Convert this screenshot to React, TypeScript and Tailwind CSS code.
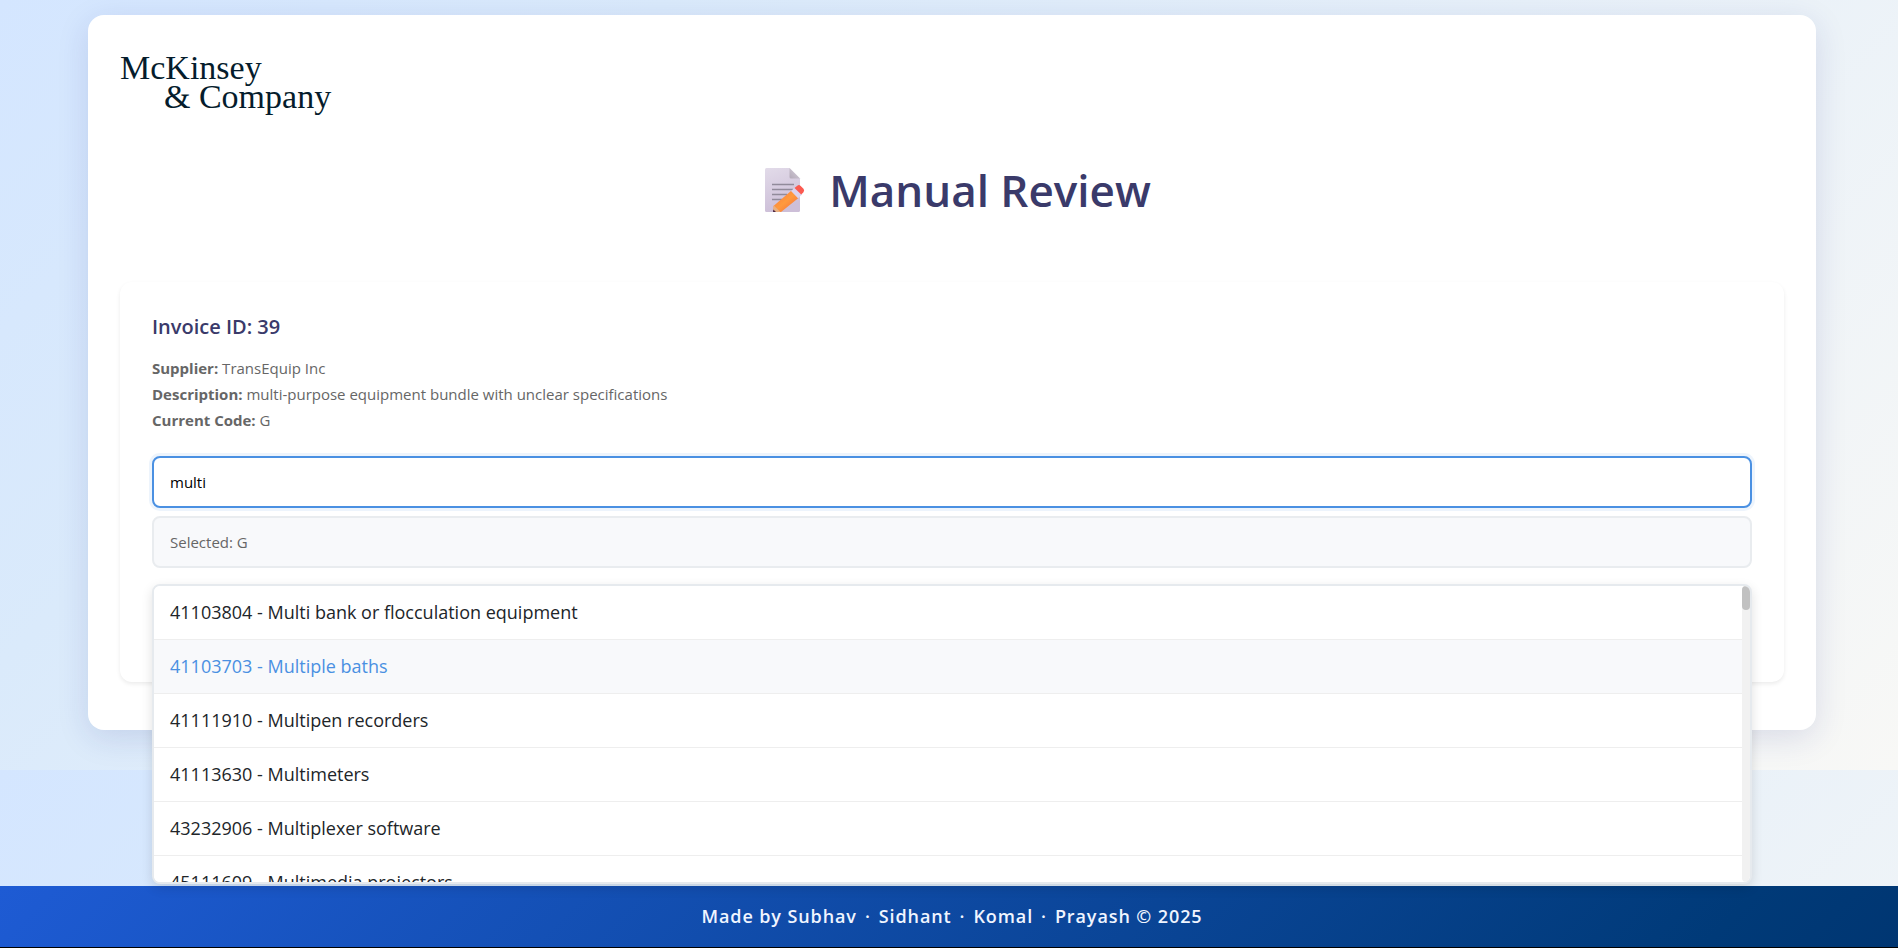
import { useState } from "react";

const options = [
  "41103804 - Multi bank or flocculation equipment",
  "41103703 - Multiple baths",
  "41111910 - Multipen recorders",
  "41113630 - Multimeters",
  "43232906 - Multiplexer software",
  "45111609 - Multimedia projectors",
];

const authors = ["Sidhant", "Komal", "Prayash © 2025"];

function MemoIcon() {
  return (
    <svg className="h-11 w-10" viewBox="0 0 40 44" aria-hidden="true">
      <defs>
        <linearGradient id="sheet" x1="0" y1="0" x2="0.3" y2="1">
          <stop offset="0" stopColor="#e2dbe9" />
          <stop offset="1" stopColor="#cdbfd8" />
        </linearGradient>
        <linearGradient id="fold" x1="0" y1="1" x2="1" y2="0">
          <stop offset="0" stopColor="#b3a9b8" />
          <stop offset="1" stopColor="#d9d3dd" />
        </linearGradient>
        <linearGradient id="wood" x1="0" y1="0" x2="1" y2="1">
          <stop offset="0" stopColor="#f9763a" />
          <stop offset="0.5" stopColor="#ff9a3e" />
          <stop offset="1" stopColor="#f2683a" />
        </linearGradient>
      </defs>
      <path d="M1.5 0H24.5L35 10.5V42.500Q35 44 33.500 44H1.500Q0 44 0 42.500V1.500Q0 0 1.500 0Z" fill="url(#sheet)" />
      <path d="M24.500 0L35 10.500H26Q24.500 10.500 24.500 9Z" fill="url(#fold)" />
      <path d="M7 16.500H29M7 21.500H28M7 26.500H22M7 31.500H17" stroke="#918a9a" strokeWidth="1.300" />
      <path d="M8.500 38L26.500 22.500L33.500 30L16 44H9Z" fill="url(#wood)" />
      <path d="M8.800 37.500L15.500 44H8V41Z" fill="#e8b083" />
      <path d="M8.300 41.500L11 44H8Z" fill="#4b2746" />
      <path d="M26 23L30 19.500L37 26.500L33 30.300Z" fill="#dcd3ee" />
      <path d="M29.500 20L32.300 17.700Q34 16.300 35.700 17.900L38.500 20.800Q40 22.600 38.300 24.400L36.200 26.500Z" fill="#fb5a50" />
    </svg>
  );
}

function Logo() {
  return (
    <div className="flex flex-col font-['Liberation_Serif',serif] text-[34px] leading-[29px] text-[#051c2c]">
      <span>McKinsey</span>
      <span className="pl-11">&amp; Company</span>
    </div>
  );
}

export default function App() {
  const [query, setQuery] = useState("multi");

  return (
    <div className="flex min-h-screen flex-col overflow-hidden bg-[linear-gradient(135deg,#d4e6ff_0%,#daeafb_25%,#f8f8f6_100%)] bg-[length:100%_770px] font-['Open_Sans','Noto_Sans',sans-serif] text-[#212529]">
      <main className="grow pt-[15px] pr-[82px] pb-10 pl-[88px]">
        <div className="rounded-2xl bg-white px-8 pt-[38px] pb-12 shadow-[0_8px_32px_rgba(31,38,135,0.13)]">
          <Logo />
          <h1 className="mt-10 mb-[53px] flex h-[78px] items-center justify-center gap-6 pl-3 text-[44px] font-semibold text-[#3a3a6a]">
            <MemoIcon />
            Manual Review
          </h1>

          <section className="h-[400px] rounded-xl bg-white p-8 shadow-[0_2px_4px_rgba(0,0,0,0.08)]">
            <h2 className="mb-[15px] text-[20px] leading-[26px] font-semibold text-[#3a3a6a]">Invoice ID: 39</h2>
            <div className="text-[15px] leading-[26px] text-[#666]">
              <p><strong>Supplier:</strong> TransEquip Inc</p>
              <p><strong>Description:</strong> multi-purpose equipment bundle with unclear specifications</p>
              <p><strong>Current Code:</strong> G</p>
            </div>

            <div className="relative mt-[23px]">
              <input
                aria-label="Search code"
                value={query}
                onChange={(e) => setQuery(e.target.value)}
                className="block h-[52px] w-full rounded-lg border-2 border-[#4a90e2] bg-white px-4 text-[15px] text-black shadow-[0_0_0_3px_rgba(74,144,226,0.1)] outline-none"
              />
              <div className="mt-2 flex h-[52px] items-center rounded-lg border-2 border-[#e9ecef] bg-[#f8f9fb] px-4 text-[15px] text-[#666]">
                Selected: G
              </div>
              <div className="absolute inset-x-0 top-32 z-10 h-[300px] overflow-hidden rounded-lg border-2 border-[#e6eaee] bg-white shadow-[0_4px_12px_rgba(0,0,0,0.12)]">
                <ul className="pr-2 text-[18px]">
                  {options.map((option, i) => (
                    <li key={option} className={i === 1 ? "bg-[#f8f9fb] text-[#4a90e2]" : "bg-white"}>
                      <button type="button" className="flex h-[54px] w-full items-center border-b border-[#eee] px-4 text-left">
                        {option}
                      </button>
                    </li>
                  ))}
                </ul>
                <div className="absolute inset-y-0 right-0 w-2 rounded-full bg-[#f1f1f1]">
                  <div className="h-6 rounded-full bg-[#c1c1c1]" />
                </div>
              </div>
            </div>
          </section>
        </div>
      </main>

      <footer className="flex h-[62px] items-center justify-center gap-2 border-b border-black bg-[linear-gradient(135deg,#1e5bd4_0%,#003a78_90%,#003672_100%)] pl-1.5 text-[18px] font-semibold tracking-wider text-[#f0f5ff]">
        <span>Made by Subhav</span>
        {authors.map((author) => (
          <span key={author} className="flex gap-2">
            <span>·</span>
            <span>{author}</span>
          </span>
        ))}
      </footer>
    </div>
  );
}
